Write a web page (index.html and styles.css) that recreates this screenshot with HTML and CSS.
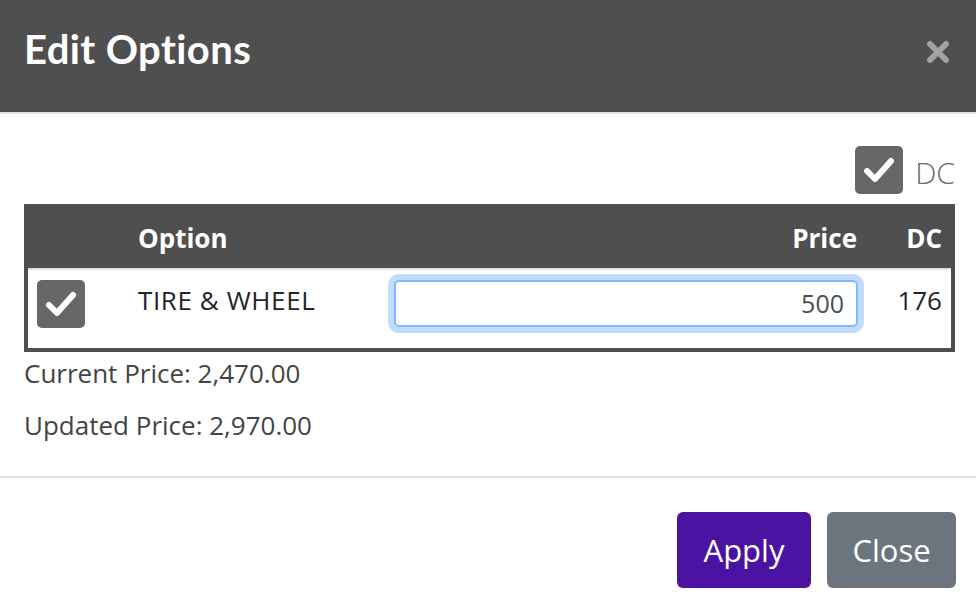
FILE: index.html
```html
<!DOCTYPE html>
<html>
<head>
<meta charset="utf-8">
<link rel="stylesheet" href="styles.css">
</head>
<body>
<div class="modal">
  <div class="modal-header">
    <h1 class="title">Edit Options</h1>
    <span class="close-x">
      <svg width="24" height="24" viewBox="0 0 24 24"><path d="M4 4 L20 20 M20 4 L4 20" stroke="#a3a3a3" stroke-width="6" stroke-linecap="round"/></svg>
    </span>
  </div>
  <div class="modal-body">
    <div class="dc-toggle">
      <span class="check">
        <svg width="32" height="28" viewBox="0 0 32 28"><path d="M4 15 L12 23 L28 5" fill="none" stroke="#fff" stroke-width="6" stroke-linecap="round" stroke-linejoin="round"/></svg>
      </span>
      <span class="dc-label">DC</span>
    </div>
    <div class="table">
      <div class="thead">
        <div class="c-check"></div>
        <div class="c-option">Option</div>
        <div class="c-price">Price</div>
        <div class="c-dc">DC</div>
      </div>
      <div class="trow">
        <div class="c-check">
          <span class="check">
            <svg width="32" height="28" viewBox="0 0 32 28"><path d="M4 15 L12 23 L28 5" fill="none" stroke="#fff" stroke-width="6" stroke-linecap="round" stroke-linejoin="round"/></svg>
          </span>
        </div>
        <div class="c-option">TIRE &amp; WHEEL</div>
        <div class="c-price"><div class="input">500</div></div>
        <div class="c-dc">176</div>
      </div>
    </div>
    <p class="line first">Current Price: 2,470.00</p>
    <p class="line">Updated Price: 2,970.00</p>
  </div>
  <div class="modal-footer">
    <button class="btn apply">Apply</button>
    <button class="btn close">Close</button>
  </div>
</div>
</body>
</html>
```
FILE: styles.css
```css
* { box-sizing: border-box; }
html, body { margin: 0; padding: 0; background: #fff; }
body { font-family: "Open Sans", "Noto Sans", sans-serif; color: #212529; width: 976px; height: 610px; overflow: hidden; }
.modal { width: 976px; }
.modal-header {
  height: 114px;
  background: #4f4f4f;
  border-bottom: 2px solid #dee2e6;
  display: flex;
  align-items: center;
  justify-content: space-between;
  padding: 0 26px 14px 24px;
}
.title {
  margin: 0;
  font-family: "Lato", sans-serif;
  font-weight: 700;
  font-size: 40px;
  line-height: 48px;
  color: #fff;
  letter-spacing: 0.4px;
}
.close-x { display: flex; width: 24px; height: 24px; margin-top: 6px; }
.modal-body { padding: 32px 21px 0 24px; }
.dc-toggle { display: flex; justify-content: flex-end; align-items: center; gap: 12px; height: 48px; margin-bottom: 10px; }
.check {
  width: 48px; height: 48px; border-radius: 5px; background: #676767;
  display: flex; align-items: center; justify-content: center;
}
.dc-label { font-size: 30px; font-weight: 300; color: #6b6b6b; padding-top: 4px; }
.table { border: 4px solid #4f4f4f; }
.thead, .trow { display: grid; grid-template-columns: 110px 250px 1fr 85px; align-items: center; }
.thead { background: #4f4f4f; color: #fff; font-weight: 700; font-size: 26px; height: 62px; border-bottom: 2px solid #dee2e6; }
.trow { height: 78px; font-size: 26px; color: #212529; align-items: start; }
.c-check { padding-left: 9px; }
.trow .c-check { padding-top: 10px; }
.trow .c-option { font-size: 26px; letter-spacing: 0.6px; padding-top: 12px; }
.c-price { text-align: right; }
.thead .c-price { padding-right: 9px; }
.trow .c-price { padding-top: 10px; }
.c-dc { text-align: right; padding-right: 9px; }
.trow .c-dc { padding-top: 12px; }
.input {
  margin: 0 8px 0 6px;
  height: 47px;
  border: 2px solid #86b7fe;
  border-radius: 5px;
  box-shadow: 0 0 0 6px #c2dcfe;
  padding: 4px 12px 0 0;
  color: #495057;
  font-size: 25px;
  text-align: right;
  background: #fff;
}
.line { margin: 0; font-size: 26px; color: #444; line-height: 34px; }
.line.first { margin-top: 4px; margin-bottom: 18px; }
.modal-footer {
  margin-top: 34px;
  border-top: 2px solid #dee2e6;
  display: flex;
  justify-content: flex-end;
  gap: 16px;
  padding: 34px 20px 0 0;
}
.btn {
  height: 76px; border: none; border-radius: 6px; color: #fff;
  font-family: "Open Sans", sans-serif; font-size: 31px; padding: 0;
}
.apply { background: #4b13a1; width: 134px; }
.close { background: #6c757d; width: 129px; }
```
